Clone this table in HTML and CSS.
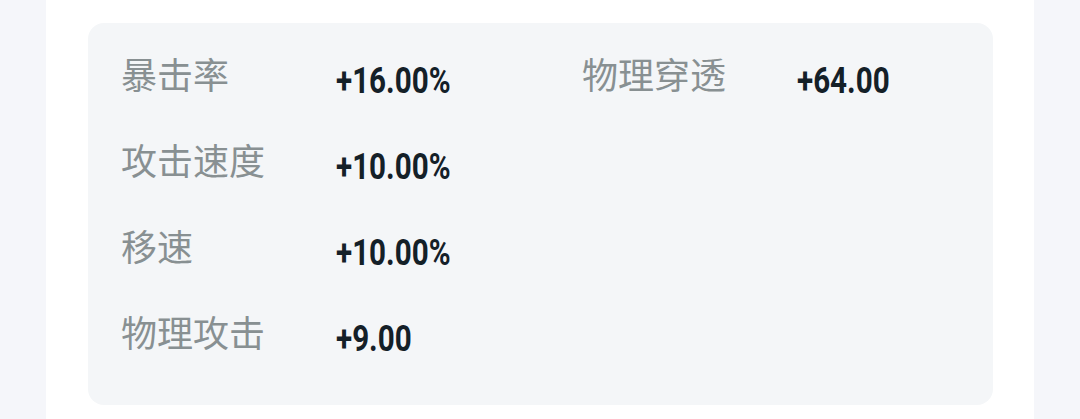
FILE: index.html
```html
<!DOCTYPE html>
<html lang="zh">
<head>
<meta charset="utf-8">
<link rel="stylesheet" href="styles.css">
</head>
<body>
<div class="page">
  <div class="card">
    <div class="panel">
      <div class="grid">
        <div class="item"><span class="label">暴击率</span><span class="value">+16.00%</span></div>
        <div class="item"><span class="label">物理穿透</span><span class="value">+64.00</span></div>
        <div class="item"><span class="label">攻击速度</span><span class="value">+10.00%</span></div>
        <div class="item"></div>
        <div class="item"><span class="label">移速</span><span class="value">+10.00%</span></div>
        <div class="item"></div>
        <div class="item"><span class="label">物理攻击</span><span class="value">+9.00</span></div>
        <div class="item"></div>
      </div>
    </div>
  </div>
</div>
</body>
</html>
```
FILE: styles.css
```css
html, body {
  margin: 0;
  padding: 0;
  background: #f5f6fa;
  width: 1080px;
  height: 419px;
  overflow: hidden;
}
.page {
  display: flex;
  justify-content: center;
  height: 419px;
}
.card {
  width: 988px;
  background: #ffffff;
  padding: 23px 41px 0 42px;
  box-sizing: border-box;
}
.panel {
  background: #f4f6f8;
  border-radius: 16px;
  height: 382px;
  padding: 31px 0 0 33px;
  box-sizing: border-box;
}
.grid {
  display: grid;
  grid-template-columns: 461px 1fr;
  row-gap: 34px;
}
.item {
  display: flex;
  align-items: center;
  height: 52px;
}
.label {
  width: 215px;
  font-family: "Noto Sans CJK SC", "Noto Sans", sans-serif;
  font-size: 36px;
  line-height: 52px;
  color: #889092;
  margin-top: -14px;
}
.value {
  display: inline-block;
  font-family: "Roboto", "Liberation Sans", sans-serif;
  font-weight: 700;
  font-size: 37px;
  line-height: 52px;
  color: #142028;
  transform: scaleX(0.8);
  transform-origin: left center;
  margin-top: 2px;
}
```
